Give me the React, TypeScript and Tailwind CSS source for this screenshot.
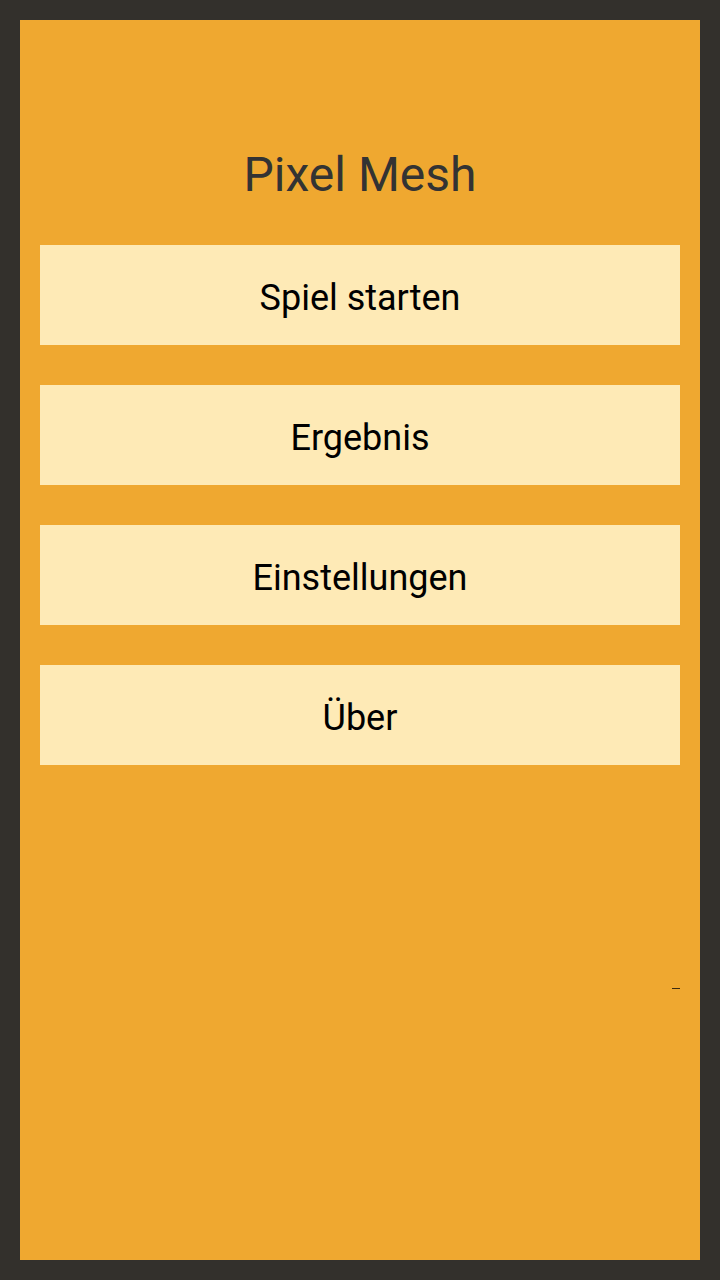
const items = ["Spiel starten", "Ergebnis", "Einstellungen", "Über"];

export default function App() {
  return (
    <div className="w-[720px] h-[1280px] bg-[#33302c] p-5 font-['Roboto',sans-serif]">
      <div className="relative h-full bg-[#efa830] px-5 pt-[117px]">
        <h1 className="h-[108px] text-center text-[48px] leading-[76px] text-[#333333]">Pixel Mesh</h1>
        <div className="flex flex-col gap-10">
          {items.map((label) => (
            <button
              key={label}
              className="h-[100px] w-full bg-[#feeab6] pt-1.5 text-center text-[36px] text-black"
            >
              {label}
            </button>
          ))}
        </div>
        {/* tiny stray mark near the right edge */}
        <div className="absolute left-[652px] top-[968px] h-px w-2 bg-[#3a2a10]" />
      </div>
    </div>
  );
}
